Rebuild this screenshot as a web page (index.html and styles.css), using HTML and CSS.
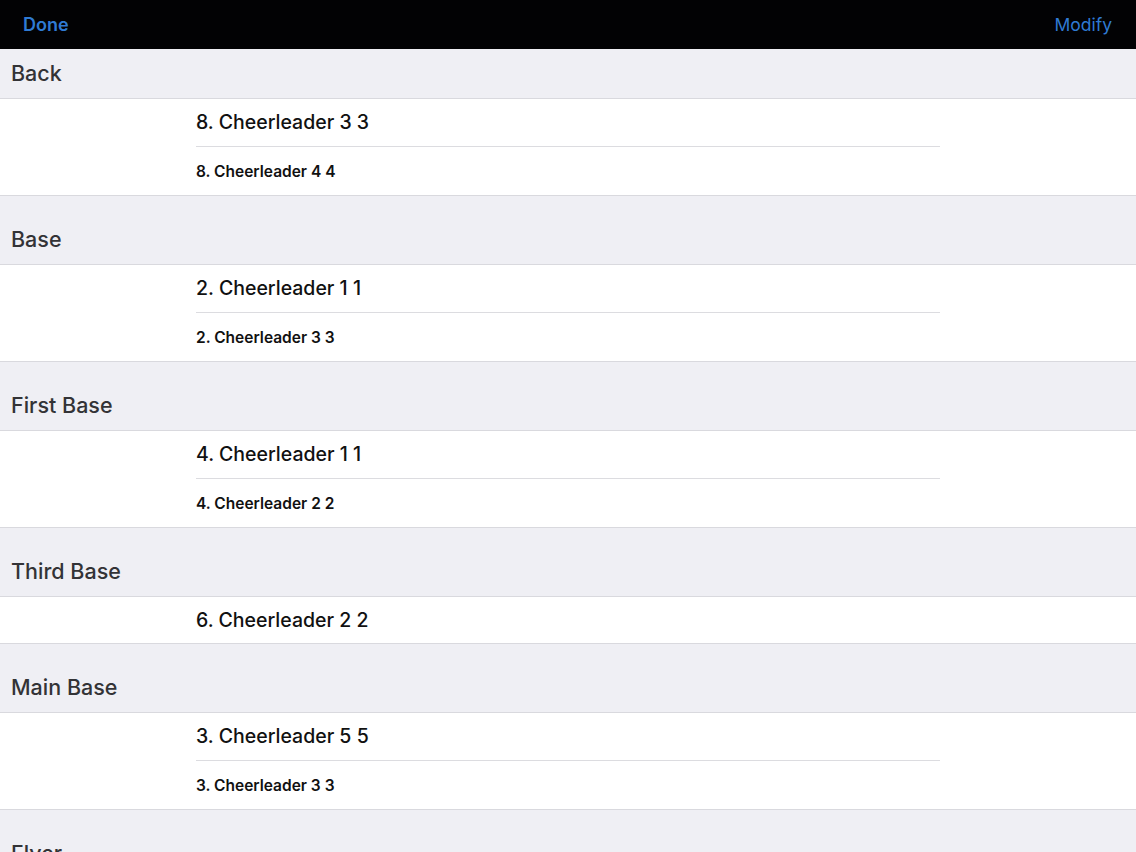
FILE: index.html
```html
<!DOCTYPE html>
<html>
<head>
<meta charset="utf-8">
<link rel="stylesheet" href="styles.css">
</head>
<body>
<header class="navbar">
  <span class="nav-btn done">Done</span>
  <span class="nav-btn">Modify</span>
</header>
<main class="list">
  <div class="section-header first">Back</div>
  <div class="group">
    <div class="cell">
      <div class="line big">8. Cheerleader 3 3</div>
      <div class="line small">8. Cheerleader 4 4</div>
    </div>
  </div>
  <div class="section-header">Base</div>
  <div class="group">
    <div class="cell">
      <div class="line big">2. Cheerleader 1 1</div>
      <div class="line small">2. Cheerleader 3 3</div>
    </div>
  </div>
  <div class="section-header">First Base</div>
  <div class="group">
    <div class="cell">
      <div class="line big">4. Cheerleader 1 1</div>
      <div class="line small">4. Cheerleader 2 2</div>
    </div>
  </div>
  <div class="section-header">Third Base</div>
  <div class="group">
    <div class="cell">
      <div class="line big">6. Cheerleader 2 2</div>
    </div>
  </div>
  <div class="section-header">Main Base</div>
  <div class="group">
    <div class="cell">
      <div class="line big">3. Cheerleader 5 5</div>
      <div class="line small">3. Cheerleader 3 3</div>
    </div>
  </div>
  <div class="section-header">Flyer</div>
</main>
</body>
</html>
```
FILE: styles.css
```css
* { box-sizing: border-box; }
html, body {
  margin: 0;
  padding: 0;
  height: 852px;
  overflow: hidden;
  background: #efeff4;
  font-family: Inter, "Noto Sans", "Liberation Sans", sans-serif;
}
.navbar {
  height: 49px;
  background: #020204;
  display: flex;
  justify-content: space-between;
  align-items: center;
  padding: 1px 24px 0 23px;
}
.nav-btn {
  color: #2f7ad3;
  font-size: 17.5px;
  line-height: 22px;
  font-weight: 400;
}
.nav-btn.done { font-weight: 600; font-size: 18px; }
.section-header {
  height: 68px;
  display: flex;
  align-items: flex-end;
  padding: 0 0 13px 11px;
  font-size: 21.5px;
  line-height: 24px;
  font-weight: 500;
  color: #333336;
  background: #efeff4;
}
.section-header.first { height: 49px; }
.group {
  background: #fff;
  border-top: 1px solid #d9d9de;
  border-bottom: 1px solid #d9d9de;
}
.cell {
  padding-left: 196px;
  width: 940px;
}
.line {
  display: flex;
  align-items: center;
  color: #111;
}
.line.big {
  height: 47px;
  padding-bottom: 2px;
  font-size: 19.5px;
  font-weight: 500;
}
.line.big:only-child { height: 46px; padding-bottom: 1px; }
.line.small {
  height: 49px;
  border-top: 1px solid #dcdce0;
  font-size: 15.5px;
  font-weight: 600;
}
```
